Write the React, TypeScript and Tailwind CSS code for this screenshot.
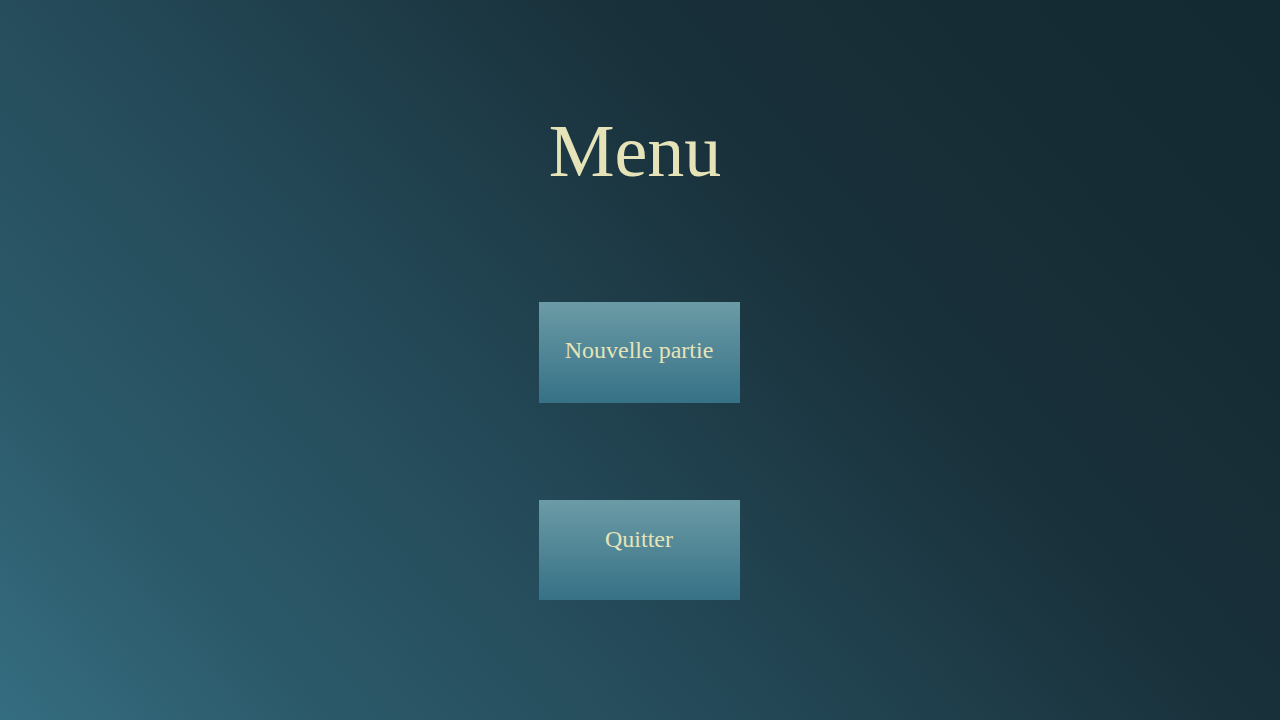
import React from "react";

export default function App() {
  return (
    <div
      className="w-[1280px] h-[720px] overflow-hidden flex flex-col items-center bg-[linear-gradient(48deg,#356d80_0%,#2b5969_17%,#254b5a_36%,#19313b_64%,#162c35_82%,#142a32_100%)]"
      style={{ fontFamily: '"Liberation Serif", "DejaVu Serif", serif' }}
    >
      <h1 className="mt-[114px] text-[74px] leading-none text-[#e6e3b8] ml-[-10px]">Menu</h1>
      <button className="mt-[114px] ml-[-2px] w-[201px] h-[101px] flex justify-center pt-[36px] bg-[linear-gradient(to_bottom,#6b9ba6,#367186)] text-[24px] leading-none text-[#e6e3b8]">
        Nouvelle partie
      </button>
      <button className="mt-[97px] ml-[-2px] w-[201px] h-[100px] flex justify-center pt-[27px] bg-[linear-gradient(to_bottom,#6b9ba6,#367186)] text-[24px] leading-none text-[#e6e3b8]">
        Quitter
      </button>
    </div>
  );
}
